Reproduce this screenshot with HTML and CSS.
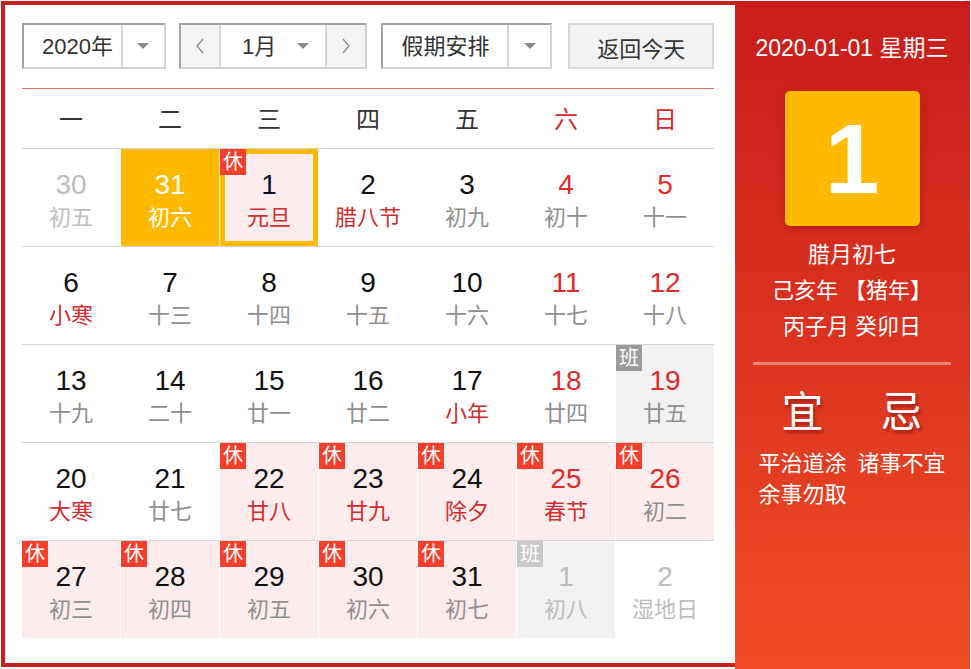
FILE: index.html
```html
<!DOCTYPE html>
<html lang="zh-CN">
<head>
<meta charset="utf-8">
<title>万年历</title>
<link rel="stylesheet" href="styles.css">
</head>
<body>
<div class="app">
  <div class="main">
    <div class="toolbar">
      <div class="sel sel-year">
        <span class="sel-text">2020年</span>
        <span class="sel-arrow"><i class="tri"></i></span>
      </div>
      <div class="sel sel-month">
        <span class="nav-btn"><svg width="10" height="16" viewBox="0 0 10 16"><polyline points="8,1 2,8 8,15" fill="none" stroke="#8c8c8c" stroke-width="1.3"/></svg></span>
        <span class="month-mid">
          <span class="sel-text">1月</span>
          <span class="month-arrow"><i class="tri"></i></span>
        </span>
        <span class="nav-btn nav-next"><svg width="10" height="16" viewBox="0 0 10 16"><polyline points="2,1 8,8 2,15" fill="none" stroke="#8c8c8c" stroke-width="1.3"/></svg></span>
      </div>
      <div class="sel sel-holiday">
        <span class="sel-text">假期安排</span>
        <span class="sel-arrow"><i class="tri"></i></span>
      </div>
      <div class="btn-today">返回今天</div>
    </div>

    <div class="calendar">
      <div class="week-head">
        <span>一</span><span>二</span><span>三</span><span>四</span><span>五</span><span class="wk">六</span><span class="wk">日</span>
      </div>

      <div class="week">
        <div class="day other"><span class="num">30</span><span class="lunar">初五</span></div>
        <div class="day sel-day"><span class="num">31</span><span class="lunar">初六</span></div>
        <div class="day today rest-bg"><span class="tag rest">休</span><span class="num">1</span><span class="lunar fest">元旦</span></div>
        <div class="day"><span class="num">2</span><span class="lunar fest">腊八节</span></div>
        <div class="day"><span class="num">3</span><span class="lunar">初九</span></div>
        <div class="day"><span class="num red">4</span><span class="lunar">初十</span></div>
        <div class="day"><span class="num red">5</span><span class="lunar">十一</span></div>
      </div>

      <div class="week">
        <div class="day"><span class="num">6</span><span class="lunar fest">小寒</span></div>
        <div class="day"><span class="num">7</span><span class="lunar">十三</span></div>
        <div class="day"><span class="num">8</span><span class="lunar">十四</span></div>
        <div class="day"><span class="num">9</span><span class="lunar">十五</span></div>
        <div class="day"><span class="num">10</span><span class="lunar">十六</span></div>
        <div class="day"><span class="num red">11</span><span class="lunar">十七</span></div>
        <div class="day"><span class="num red">12</span><span class="lunar">十八</span></div>
      </div>

      <div class="week">
        <div class="day"><span class="num">13</span><span class="lunar">十九</span></div>
        <div class="day"><span class="num">14</span><span class="lunar">二十</span></div>
        <div class="day"><span class="num">15</span><span class="lunar">廿一</span></div>
        <div class="day"><span class="num">16</span><span class="lunar">廿二</span></div>
        <div class="day"><span class="num">17</span><span class="lunar fest">小年</span></div>
        <div class="day"><span class="num red">18</span><span class="lunar">廿四</span></div>
        <div class="day work-bg"><span class="tag work">班</span><span class="num red">19</span><span class="lunar">廿五</span></div>
      </div>

      <div class="week">
        <div class="day"><span class="num">20</span><span class="lunar fest">大寒</span></div>
        <div class="day"><span class="num">21</span><span class="lunar">廿七</span></div>
        <div class="day rest-bg"><span class="tag rest">休</span><span class="num">22</span><span class="lunar fest">甘八</span></div>
        <div class="day rest-bg"><span class="tag rest">休</span><span class="num">23</span><span class="lunar fest">甘九</span></div>
        <div class="day rest-bg"><span class="tag rest">休</span><span class="num">24</span><span class="lunar fest">除夕</span></div>
        <div class="day rest-bg"><span class="tag rest">休</span><span class="num red">25</span><span class="lunar fest">春节</span></div>
        <div class="day rest-bg"><span class="tag rest">休</span><span class="num red">26</span><span class="lunar">初二</span></div>
      </div>

      <div class="week">
        <div class="day rest-bg"><span class="tag rest">休</span><span class="num">27</span><span class="lunar">初三</span></div>
        <div class="day rest-bg"><span class="tag rest">休</span><span class="num">28</span><span class="lunar">初四</span></div>
        <div class="day rest-bg"><span class="tag rest">休</span><span class="num">29</span><span class="lunar">初五</span></div>
        <div class="day rest-bg"><span class="tag rest">休</span><span class="num">30</span><span class="lunar">初六</span></div>
        <div class="day rest-bg"><span class="tag rest">休</span><span class="num">31</span><span class="lunar">初七</span></div>
        <div class="day other work-bg"><span class="tag work faded">班</span><span class="num">1</span><span class="lunar">初八</span></div>
        <div class="day other"><span class="num">2</span><span class="lunar">湿地日</span></div>
      </div>
    </div>
  </div>

  <div class="side">
    <div class="side-date">2020-01-01 星期三</div>
    <div class="big-day">1</div>
    <div class="side-lunar">
      <div>腊月初七</div>
      <div>己亥年 【猪年】</div>
      <div>丙子月 癸卯日</div>
    </div>
    <div class="side-rule"></div>
    <div class="yiji">
      <div class="yiji-col">
        <div class="yiji-title">宜</div>
        <div class="yiji-text">平治道涂 余事勿取</div>
      </div>
      <div class="yiji-col">
        <div class="yiji-title">忌</div>
        <div class="yiji-text">诸事不宜</div>
      </div>
    </div>
  </div>
</div>
</body>
</html>
```

FILE: styles.css
```css
* { box-sizing: border-box; }

html, body {
  margin: 0;
  padding: 0;
  background: #fff;
}

body {
  font-family: "Liberation Sans", "Noto Sans CJK SC", sans-serif;
  color: #333;
}

.app {
  margin: 1px;
  width: 969px;
  height: 668px;
  display: flex;
}

/* ---------- left main panel ---------- */
.main {
  width: 734px;
  height: 666px;
  border: 4px solid #c6201d;
  border-right: none;
  padding: 18px 21px 0 17px;
  background: #fff;
}

.toolbar {
  display: flex;
  height: 46px;
}

.sel {
  display: flex;
  height: 46px;
  border: 2px solid;
  border-color: #a3a3a3 #d2d2d2 #d2d2d2 #a3a3a3;
  background: #fff;
  font-size: 22px;
  color: #333;
  align-items: stretch;
}

.sel-text {
  display: flex;
  align-items: center;
  line-height: 1;
  padding-top: 1px;
}

.sel-arrow {
  display: flex;
  align-items: center;
  justify-content: center;
  width: 44px;
  border-left: 2px solid #d6d6d6;
}

.tri {
  display: block;
  width: 0;
  height: 0;
  border-left: 6px solid transparent;
  border-right: 6px solid transparent;
  border-top: 6px solid #8a8a8a;
}

.sel-year {
  width: 144px;
}
.sel-year .sel-text {
  width: 98px;
  padding-left: 18px;
}

.sel-month {
  width: 189px;
  margin-left: 13px;
}

.nav-btn {
  width: 40px;
  display: flex;
  align-items: center;
  justify-content: center;
  background: #f4f4f4;
  border-right: 2px solid #d6d6d6;
}
.nav-btn.nav-next {
  border-right: none;
  border-left: 2px solid #d6d6d6;
}

.month-mid {
  flex: 1;
  display: flex;
  justify-content: space-between;
}
.month-mid .sel-text {
  padding-left: 21px;
}
.month-arrow {
  display: flex;
  align-items: center;
  justify-content: center;
  width: 44px;
}

.sel-holiday {
  width: 171px;
  margin-left: 14px;
}
.sel-holiday .sel-text {
  width: 125px;
  padding-left: 18px;
}

.btn-today {
  width: 146px;
  height: 46px;
  margin-left: 16px;
  border: 2px solid #d8d8d8;
  background: #f3f3f3;
  font-size: 22px;
  color: #333;
  display: flex;
  align-items: center;
  justify-content: center;
  padding-top: 1px;
}

/* ---------- calendar grid ---------- */
.calendar {
  margin-top: 19px;
  border-top: 1px solid #e06a63;
}

.week-head {
  display: grid;
  grid-template-columns: repeat(7, 1fr);
  column-gap: 1px;
  height: 59px;
  padding-bottom: 3px;
  font-size: 24px;
  color: #333;
}
.week-head span {
  display: flex;
  align-items: center;
  justify-content: center;
}
.week-head .wk {
  color: #d6282b;
}

.week {
  display: grid;
  grid-template-columns: repeat(7, 1fr);
  column-gap: 1px;
  height: 98px;
  border-top: 1px solid #d4d4d4;
}

.day {
  position: relative;
  display: flex;
  flex-direction: column;
  align-items: center;
  padding-top: 20px;
  background: #fff;
}

.num {
  font-size: 28px;
  line-height: 32px;
  color: #111;
}
.num.red {
  color: #e02a2a;
}

.lunar {
  margin-top: 4px;
  font-size: 22px;
  line-height: 26px;
  color: #8f8f8f;
}
.lunar.fest {
  color: #cf2d2f;
}

.rest-bg {
  background: #fdeced;
}
.work-bg {
  background: #f2f2f2;
}

.day.other .num,
.day.other .lunar {
  color: #bdbdbd;
}

.day.sel-day {
  background: #ffba00;
}
.day.sel-day .num,
.day.sel-day .lunar {
  color: #fff;
}

.day.today {
  box-shadow: inset 0 0 0 5px #ffba00;
}
.day.today .num {
  color: #0a0f2a;
}

.tag {
  position: absolute;
  left: 0;
  top: 0;
  width: 26px;
  height: 26px;
  display: flex;
  align-items: center;
  justify-content: center;
  font-size: 20px;
  line-height: 1;
  color: #fff;
}
.tag.rest {
  background: #f3402c;
}
.tag.work {
  background: #9b9b9b;
}
.tag.work.faded {
  background: #c9c9c9;
}

/* ---------- right side panel ---------- */
.side {
  width: 235px;
  height: 668px;
  background: linear-gradient(to bottom, #c81d1b 0%, #db3320 50%, #f04d25 100%);
  color: #fff;
  padding: 32px 19px 0 18px;
  display: flex;
  flex-direction: column;
  align-items: center;
}

.side-date {
  font-size: 23px;
  line-height: 30px;
  white-space: nowrap;
}

.big-day {
  margin-top: 28px;
  width: 135px;
  height: 135px;
  background: #ffba00;
  border-radius: 5px;
  box-shadow: 0 3px 8px rgba(120, 10, 0, 0.35);
  display: flex;
  align-items: center;
  justify-content: center;
  font-size: 98px;
  font-weight: bold;
  line-height: 1;
  color: #fff;
}

.side-lunar {
  margin-top: 11px;
  font-size: 22px;
  line-height: 36px;
  text-align: center;
  white-space: nowrap;
}

.side-rule {
  margin-top: 17px;
  width: 198px;
  height: 3px;
  background: rgba(255, 255, 255, 0.38);
}

.yiji {
  margin-top: 23px;
  width: 198px;
  display: grid;
  grid-template-columns: 1fr 1fr;
}

.yiji-col {
  display: flex;
  flex-direction: column;
  align-items: center;
}

.yiji-title {
  font-size: 42px;
  line-height: 50px;
  text-shadow: 2px 3px 3px rgba(90, 0, 0, 0.45);
}

.yiji-text {
  margin-top: 10px;
  font-size: 22px;
  line-height: 31px;
  text-align: center;
  width: 96px;
}
```
